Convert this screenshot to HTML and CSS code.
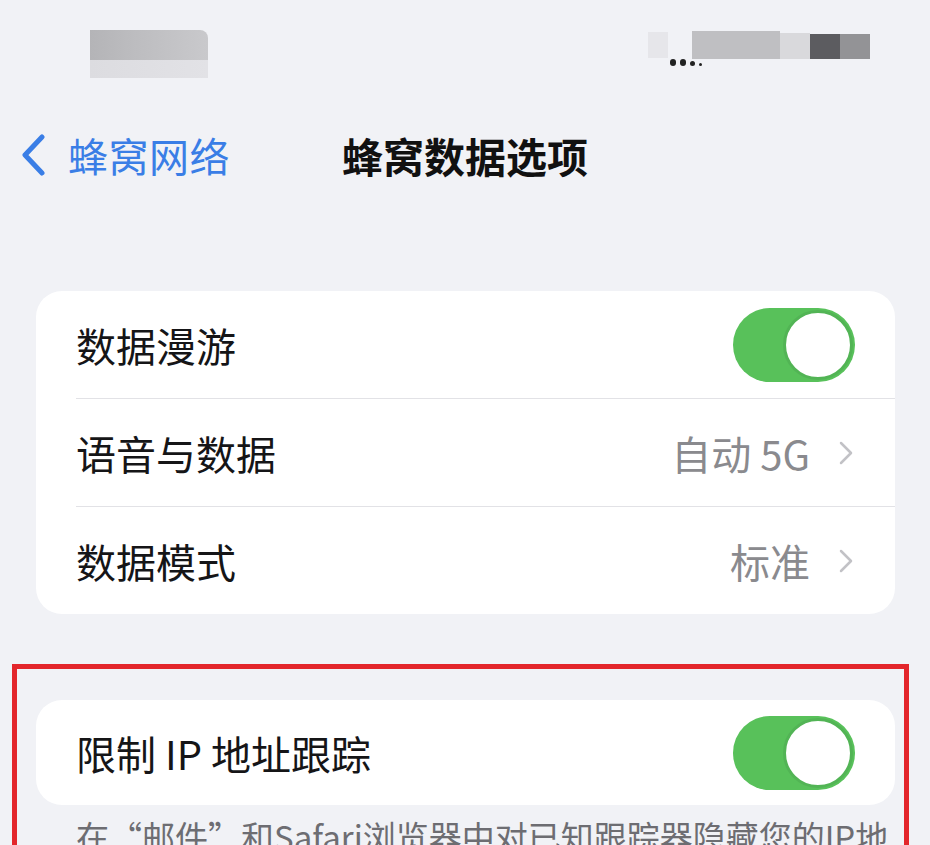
FILE: index.html
```html
<!DOCTYPE html>
<html lang="zh-CN">
<head>
<meta charset="utf-8">
<title>蜂窝数据选项</title>
<link rel="stylesheet" href="styles.css">
</head>
<body>
<div class="screen">
  <div class="status">
    <div class="blur-left">
      <div class="bl-top"></div>
      <div class="bl-bottom"></div>
    </div>
    <div class="blur-right">
      <div class="br-pre"></div>
      <div class="dots"><span></span><span></span><span></span><span></span></div>
      <div class="br-a"></div>
      <div class="br-b"></div>
      <div class="br-c"></div>
      <div class="br-d"></div>
    </div>
  </div>

  <div class="nav">
    <div class="back">
      <svg class="back-chev" width="26" height="42" viewBox="0 0 26 42"><polyline points="22,3 5,21 22,39" fill="none" stroke="#3a7ee6" stroke-width="5" stroke-linecap="round" stroke-linejoin="round"/></svg>
      <span class="back-text">蜂窝网络</span>
    </div>
    <div class="title">蜂窝数据选项</div>
    <div class="nav-spacer"></div>
  </div>

  <div class="card card-main">
    <div class="row">
      <span class="label">数据漫游</span>
      <div class="toggle"><div class="knob"></div></div>
    </div>
    <div class="divider"></div>
    <div class="row">
      <span class="label">语音与数据</span>
      <div class="value">自动 5G
        <svg class="chev" width="16" height="24" viewBox="0 0 16 24"><polyline points="3,2 13,12 3,22" fill="none" stroke="#c2c2c6" stroke-width="2.5" stroke-linecap="round" stroke-linejoin="round"/></svg>
      </div>
    </div>
    <div class="divider"></div>
    <div class="row">
      <span class="label">数据模式</span>
      <div class="value">标准
        <svg class="chev" width="16" height="24" viewBox="0 0 16 24"><polyline points="3,2 13,12 3,22" fill="none" stroke="#c2c2c6" stroke-width="2.5" stroke-linecap="round" stroke-linejoin="round"/></svg>
      </div>
    </div>
  </div>

  <div class="highlight">
    <div class="card card-ip">
      <div class="row row-ip">
        <span class="label">限制 IP 地址跟踪</span>
        <div class="toggle"><div class="knob"></div></div>
      </div>
    </div>
    <p class="footnote">在“邮件”和Safari浏览器中对已知跟踪器隐藏您的IP地址。</p>
  </div>
</div>
</body>
</html>
```

FILE: styles.css
```css
* { box-sizing: border-box; }
html, body {
  margin: 0;
  padding: 0;
}
body {
  background: #f2f2f7;
  font-family: "Noto Sans CJK SC", "Noto Sans", sans-serif;
  color: #1c1c1e;
}
.screen {
  width: 930px;
  height: 845px;
  overflow: hidden;
  background: #f1f2f6;
}

/* status bar (blurred) */
.status {
  height: 115px;
  display: flex;
  justify-content: space-between;
  padding: 30px 60px 0 90px;
}
.blur-left {
  width: 118px;
  height: 48px;
  display: flex;
  flex-direction: column;
}
.bl-top {
  height: 30px;
  background: linear-gradient(90deg, #b4b4b7 0%, #bdbdc0 40%, #c9c9cc 100%);
  border-radius: 0 8px 0 0;
}
.bl-bottom {
  height: 18px;
  background: linear-gradient(90deg, #dcdce0, #e2e2e6);
}
.blur-right {
  display: flex;
  align-items: flex-start;
  height: 40px;
  position: relative;
}
.br-pre {
  width: 20px;
  height: 26px;
  margin-top: 2px;
  background: #e6e6ea;
}
.dots {
  display: flex;
  gap: 4px;
  align-items: flex-end;
  height: 36px;
  margin-right: -10px;
  margin-left: 2px;
  z-index: 1;
  position: relative;
}
.dots span {
  width: 6px; height: 7px; border-radius: 3px; background: #222;
}
.dots span:nth-child(3) { width: 5px; height: 5px; }
.dots span:nth-child(4) { width: 3px; height: 3px; }
.br-a { width: 88px; height: 28px; background: #bfbfc2; margin-top: 1px; }
.br-b { width: 30px; height: 26px; background: #d9d9dc; margin-top: 3px; }
.br-c { width: 30px; height: 25px; background: #5c5c60; margin-top: 4px; }
.br-d { width: 30px; height: 25px; background: #939396; margin-top: 4px; }

/* navigation */
.nav {
  height: 80px;
  display: grid;
  grid-template-columns: 1fr auto 1fr;
  align-items: center;
  padding: 0 20px;
}
.back {
  display: flex;
  align-items: center;
  gap: 22px;
}
.back-chev { display: block; }
.back-text {
  font-size: 40px;
  color: #3a7ee6;
  line-height: 1;
  letter-spacing: 0.5px;
}
.title {
  font-size: 41px;
  font-weight: 700;
  line-height: 1;
  color: #111;
  padding-left: 0;
}

/* cards */
.card {
  background: #ffffff;
  border-radius: 26px;
}
.card-main {
  margin: 96px 35px 0 36px;
}
.row {
  height: 107px;
  display: flex;
  align-items: center;
  justify-content: space-between;
  padding: 0 38px 0 40px;
}
.label {
  font-size: 40px;
  line-height: 1;
  color: #151517;
}
.divider {
  height: 1px;
  background: #e2e2e6;
  margin-left: 40px;
}
.value {
  display: flex;
  align-items: center;
  font-size: 40px;
  color: #8a8a8e;
  line-height: 1;
  gap: 28px;
  margin-right: 3px;
}
.chev { display: block; }

/* toggle */
.toggle {
  width: 122px;
  height: 74px;
  border-radius: 37px;
  background: #58c15a;
  position: relative;
  margin-right: 2px;
}
.knob {
  position: absolute;
  right: 2px;
  top: 2px;
  width: 70px;
  height: 70px;
  border-radius: 50%;
  background: #ffffff;
  border: 3px solid #52b455;
}

/* highlighted region */
.highlight {
  margin: 50px 21px 0 12px;
  border: 5px solid #e3262b;
  border-bottom: none;
  padding: 31px 9px 0 19px;
  height: 200px;
}
.card-ip .row-ip {
  height: 105px;
}
.footnote {
  margin: 12px 0 0 40px;
  width: 820px;
  font-size: 33px;
  line-height: 1.2;
  color: #6d6d72;
}
```
